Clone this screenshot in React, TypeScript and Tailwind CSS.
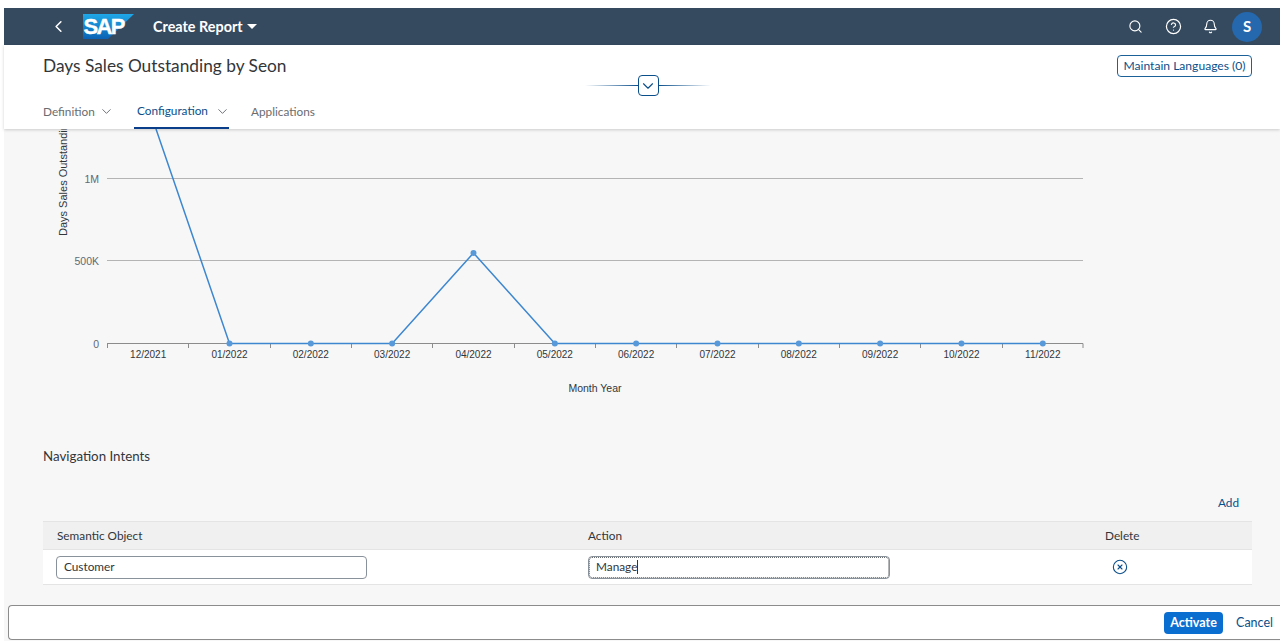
import React from "react"
import { Bell, ChevronDown, ChevronLeft, CircleHelp, CircleX, Search } from "lucide-react"

const months = ["12/2021", "01/2022", "02/2022", "03/2022", "04/2022", "05/2022", "06/2022", "07/2022", "08/2022", "09/2022", "10/2022", "11/2022"]
const values = [null, 343.5, 343.5, 343.5, 253, 343.5, 343.5, 343.5, 343.5, 343.5, 343.5, 343.5]
const left = 107.5
const step = 81.33

const SapLogo = () => (
  <svg width="51" height="26" viewBox="0 0 51 26" className="shrink-0">
    <defs>
      <linearGradient id="sap" x1="0" y1="0" x2="0" y2="1">
        <stop offset="0" stopColor="#1fa8e8" />
        <stop offset="1" stopColor="#0a62b5" />
      </linearGradient>
    </defs>
    <path d="M0 0H51L25 25H0Z" fill="url(#sap)" />
    <text x="0.5" y="20" fill="#fff" stroke="#fff" strokeWidth="0.4" fontSize="22" fontWeight="700" letterSpacing="-1.6" fontFamily="'Liberation Sans', sans-serif">SAP</text>
  </svg>
)

const Chart = () => {
  const points = months.map((_, i) => ({ x: left + step * (i + 0.5), y: values[i] }))
  const line = "M156 129L" + points.filter((p) => p.y !== null).map((p) => `${p.x} ${p.y}`).join("L")

  return (
    <svg width="1276" height="276" viewBox="4 129 1276 276" className="block shrink-0" fontFamily="'Liberation Sans', sans-serif">
      {/* grid */}
      <path d="M107 178.5H1083M107 260.5H1083" stroke="#b4b4b4" strokeWidth="1" />
      <path d="M107 343.5H1083" stroke="#8c8c8c" strokeWidth="1" />
      {months.map((_, i) => (
        <path key={i} d={`M${107.5 + Math.round(step * i)} 343.5V348`} stroke="#8c8c8c" strokeWidth="1" />
      ))}
      <path d="M1083 343.5V348" stroke="#8c8c8c" strokeWidth="1" />

      {/* y axis */}
      <g fill="#5f6a74" fontSize="10.5" textAnchor="end">
        <text x="99" y="182.500">1M</text>
        <text x="99" y="264.500">500K</text>
        <text x="99" y="347.500">0</text>
      </g>
      <text transform="translate(67 236) rotate(-90)" fill="#32363a" fontSize="11">Days Sales Outstanding</text>

      {/* x axis */}
      <g fill="#32363a" fontSize="10" textAnchor="middle">
        {months.map((m, i) => (
          <text key={m} x={left + step * (i + 0.5)} y="358">{m}</text>
        ))}
      </g>
      <text x="595" y="392" fill="#32363a" fontSize="10.5" textAnchor="middle">Month Year</text>

      {/* series */}
      <path d={line} fill="none" stroke="#3d87d0" strokeWidth="1.5" />
      {points.map((p, i) =>
        p.y === null ? null : <circle key={i} cx={p.x} cy={p.y} r="3" fill="#5899da" />
      )}
    </svg>
  )
}

const App = () => {
  return (
    <div className="flex h-[641px] w-[1280px] flex-col overflow-hidden bg-white pt-2 pl-1 font-['Lato',sans-serif] text-[#32363a]">
      {/* shell bar */}
      <header className="flex h-[37px] shrink-0 items-center bg-[#354a5f] pr-[18px] text-white">
        <ChevronLeft className="ml-[45px] size-[19px]" strokeWidth={2} />
        <div className="ml-[15px] flex">
          <SapLogo />
        </div>
        <div className="ml-[19px] flex items-center gap-[4px] text-[14.4px] font-bold">
          Create Report
          <span className="h-0 w-0 border-x-[5px] border-t-[5px] border-x-transparent border-t-white" />
        </div>
        <div className="ml-auto flex items-center">
          <Search className="size-[15px]" strokeWidth={1.8} />
          <CircleHelp className="ml-[22px] size-[17px]" strokeWidth={1.7} />
          <Bell className="ml-[21px] size-[15px]" strokeWidth={1.8} />
          <div className="ml-[14px] flex size-[30px] items-center justify-center rounded-full bg-[#2568ad] text-[15px] font-bold">S</div>
        </div>
      </header>

      {/* object page header */}
      <div className="relative z-10 h-[84px] shrink-0 bg-white shadow-[0_1px_3px_rgba(0,0,0,0.18)]">
        <div className="flex items-start justify-between pt-[9px] pr-7 pl-[39px]">
          <h1 className="text-[17.3px] leading-6 font-normal">Days Sales Outstanding by Seon</h1>
          <button className="mt-px h-[22px] w-[135px] rounded border border-[#1d6199] text-[12.1px] text-[#0b4f8a]">Maintain Languages (0)</button>
        </div>
        <div className="absolute top-[30px] left-[581px] flex w-[126px] items-center">
          <span className="h-px flex-1 bg-gradient-to-r from-transparent to-[#0b4f8a]" />
          <span className="flex h-[21px] w-[21px] items-center justify-center rounded border border-[#0b4f8a] bg-white">
            <ChevronDown className="size-[18px] text-[#0b4f8a]" strokeWidth={1.5} />
          </span>
          <span className="h-px flex-1 bg-gradient-to-l from-transparent to-[#0b4f8a]" />
        </div>
        <nav className="mt-[14px] flex h-[37px] items-stretch pt-[3px] pl-[39px] text-[11.8px]">
          <div className="flex w-[71px] items-center justify-between pb-px text-[#6a6d70]">
            Definition
            <ChevronDown className="size-[15px] shrink-0 text-[#5a5f66]" strokeWidth={1.4} />
          </div>
          <div className="ml-[20px] flex w-[95px] items-center gap-[7px] border-b-2 border-[#0a3d8a] pl-[3px] text-[#0a4f8a]">
            Configuration
            <ChevronDown className="size-[15px] shrink-0 text-[#5a5f66]" strokeWidth={1.4} />
          </div>
          <div className="ml-[22px] flex items-center pb-px text-[#6a6d70]">Applications</div>
        </nav>
      </div>

      {/* content */}
      <main className="min-h-0 flex-1 overflow-hidden bg-[#f7f7f7]">
        <Chart />
        <div className="pt-[42px] pr-7 pl-[39px] text-[11.8px]">
          <h2 className="text-[13.3px] leading-[18px] font-normal">Navigation Intents</h2>
          <div className="mt-[28px] flex h-[28px] items-center justify-end pr-[13px] pb-[9px] text-[#0b4f8a]">Add</div>
          <div className="grid h-[29px] grid-cols-[545px_517px_1fr] items-center border-y border-[#e4e4e4] bg-[#f0f0f0]">
            <span className="pl-[14px]">Semantic Object</span>
            <span>Action</span>
            <span>Delete</span>
          </div>
          <div className="grid h-[35px] grid-cols-[545px_517px_1fr] items-center border-b border-[#e4e4e4] bg-white">
            <div className="pl-[13px]">
              <div className="flex h-[23px] w-[311px] items-center rounded-sm border border-[#89919a] bg-white pl-[7px]">Customer</div>
            </div>
            <div className="flex h-[23px] w-[302px] items-center rounded-sm border border-[#89919a] bg-white pl-[7px] outline-1 -outline-offset-2 outline-[#6a6d70] outline-dotted">
              Manage<span className="h-[14px] w-px bg-[#32363a]" />
            </div>
            <CircleX className="ml-[7px] size-[16px] text-[#0b4f8a]" strokeWidth={1.6} />
          </div>
        </div>
      </main>

      {/* footer */}
      <div className="bg-[#f7f7f7] pb-px pl-1">
        <footer className="flex h-[35px] items-center justify-end rounded-l border border-r-0 border-[#8c8c8c] bg-white pr-[7px] text-[12.5px]">
          <button className="h-[22px] w-[59px] rounded bg-[#0a6ed1] pt-px font-bold text-white">Activate</button>
          <button className="ml-[13px] pt-px text-[#0b4f8a]">Cancel</button>
        </footer>
      </div>
    </div>
  )
}

export default App
